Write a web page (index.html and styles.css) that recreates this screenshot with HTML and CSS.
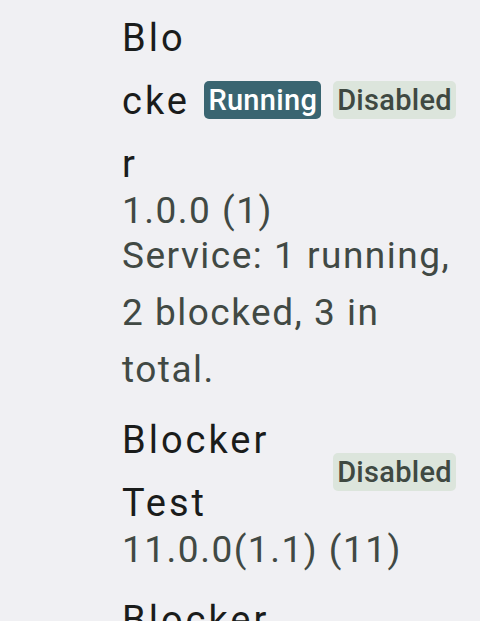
FILE: index.html
```html
<!DOCTYPE html>
<html>
<head>
<meta charset="utf-8">
<link rel="stylesheet" href="styles.css">
</head>
<body>
<div class="list">
  <div class="item item-first">
    <div class="head">
      <div class="title">Blocker</div>
      <div class="badges">
        <span class="badge badge-running">Running</span>
        <span class="badge badge-disabled">Disabled</span>
      </div>
    </div>
    <div class="version">1.0.0 (1)</div>
    <div class="service">Service: 1 running, 2 blocked, 3 in total.</div>
  </div>
  <div class="item item-second">
    <div class="head">
      <div class="title">Blocker Test</div>
      <div class="badges">
        <span class="badge badge-disabled">Disabled</span>
      </div>
    </div>
    <div class="version">11.0.0(1.1) (11)</div>
  </div>
  <div class="item">
    <div class="head">
      <div class="title">Blocker</div>
    </div>
  </div>
</div>
</body>
</html>
```

FILE: styles.css
```css
html, body {
  margin: 0;
  padding: 0;
  background: #f0f0f3;
  font-family: Roboto, "Noto Sans", sans-serif;
  overflow: hidden;
}

.list {
  display: flex;
  flex-direction: column;
  padding: 7px 24px 0 122px;
}

.item {
  display: flex;
  flex-direction: column;
}

.item-first {
  padding-bottom: 11px;
}

.item-second {
  padding-bottom: 24px;
}

.head {
  display: flex;
  align-items: center;
  gap: 8px;
}

.title {
  flex: 1 1 0;
  min-width: 0;
  font-size: 38px;
  line-height: 63px;
  letter-spacing: 3px;
  color: #1a1c1b;
  overflow-wrap: anywhere;
}

.badges {
  display: flex;
  gap: 12px;
  flex-shrink: 0;
}

.item-first .badges {
  margin-bottom: 4px;
}

.badge {
  display: inline-block;
  height: 38px;
  line-height: 38px;
  padding: 0 4px;
  border-radius: 5px;
  font-size: 29px;
  font-weight: 500;
  letter-spacing: 0.3px;
}

.badge-running {
  background: #3a6571;
  color: #ffffff;
}

.badge-disabled {
  background: #dce5dc;
  color: #3f4942;
}

.version {
  font-size: 37px;
  line-height: 30px;
  letter-spacing: 1.5px;
  color: #414944;
}

.service {
  margin-top: 1px;
  font-size: 37px;
  line-height: 57px;
  letter-spacing: 1.5px;
  color: #414944;
}
```
